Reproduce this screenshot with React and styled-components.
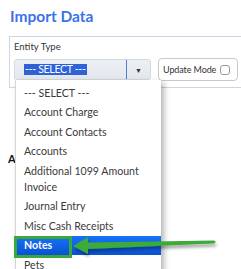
import { createGlobalStyle, styled } from "styled-components";

const GlobalStyle = createGlobalStyle`
  html, body {
    height: 100%;
  }
  body {
    margin: 0;
    background: #fff;
    font-family: Lato, "Open Sans", sans-serif;
    overflow: hidden;
  }
  #root {
    min-height: 100vh;
  }
`;

const options = [
  "--- SELECT ---",
  "Account Charge",
  "Account Contacts",
  "Accounts",
  "Additional 1099 Amount Invoice",
  "Journal Entry",
  "Misc Cash Receipts",
  "Notes",
  "Pets",
];

const App = () => {
  return (
    <Page>
      <GlobalStyle />
      <Title>Import Data</Title>
      <Panel>
        <Label>Entity Type</Label>
        <Row>
          <SelectWrap>
            <Select>
              <Value>
                <Selected>--- SELECT ---</Selected>
              </Value>
              <Caret>▼</Caret>
            </Select>
            <Dropdown>
              {options.map((o) => (
                <Item key={o} $active={o === "Notes"}>
                  {o}
                  {o === "Notes" && (
                    <>
                      <Callout />
                      <Arrow width="150" height="30" viewBox="0 0 150 30">
                        <defs>
                          <filter id="sh" x="-10%" y="-50%" width="120%" height="200%">
                            <feDropShadow dx="1" dy="3" stdDeviation="1.5" floodColor="#000" floodOpacity="0.35" />
                          </filter>
                        </defs>
                        <g filter="url(#sh)">
                          <polygon points="0,16 15,7 15,12.5 141,10.5 143,12 141,13.5 15,19 15,24" fill="#3cab3a" />
                        </g>
                      </Arrow>
                    </>
                  )}
                </Item>
              ))}
            </Dropdown>
          </SelectWrap>
          <Toggle>
            Update Mode
            <Check />
          </Toggle>
        </Row>
      </Panel>
      <Section>Attachments</Section>
    </Page>
  );
};

const Page = styled.div`
  padding: 7px 0 0 9px;
`;

const Title = styled.h1`
  margin: 0 0 11px 1px;
  font-size: 15.5px;
  line-height: 18px;
  font-weight: 700;
  color: #3a72ea;
`;

const Panel = styled.div`
  border: 1px solid #c9d7e6;
  border-right: none;
  padding: 4px 0 6px 4px;
`;

const Label = styled.div`
  font-size: 9.5px;
  line-height: 12px;
  color: #333;
  margin-bottom: 5px;
`;

const Row = styled.div`
  display: flex;
  align-items: center;
  gap: 7px;
`;

const SelectWrap = styled.div`
  position: relative;
`;

const Select = styled.div`
  width: 137px;
  height: 21px;
  box-sizing: border-box;
  display: flex;
  border: 1px solid #d3d9e0;
  border-radius: 3px;
  background: linear-gradient(#eceff3, #e4e8ed);
`;

const Value = styled.div`
  flex: 1;
  display: flex;
  align-items: center;
  padding-left: 9px;
  border-right: 1px solid #4f7fd0;
`;

const Selected = styled.span`
  background: #2f62d6;
  color: #fff;
  font-size: 10.5px;
  line-height: 11px;
  letter-spacing: -0.3px;
  padding: 0 1px;
`;

const Caret = styled.div`
  width: 23px;
  display: flex;
  align-items: center;
  justify-content: center;
  font-size: 7px;
  color: #333;
`;

const Dropdown = styled.div`
  position: absolute;
  top: 21px;
  left: 1px;
  width: 146px;
  box-sizing: border-box;
  padding-top: 3px;
  background: #fff;
  border-left: 1px solid #d6d6d6;
  box-shadow: 3px 3px 6px rgba(0, 0, 0, 0.3);
  z-index: 2;
`;

const Item = styled.div`
  position: relative;
  padding: 1.75px 9px 1.75px 8px;
  font-size: 10.6px;
  line-height: 16px;
  color: ${(p) => (p.$active ? "#fff" : "#3a3a3a")};
  font-weight: ${(p) => (p.$active ? 700 : 400)};
  background: ${(p) => (p.$active ? "linear-gradient(#1672f7, #0b52d2)" : "transparent")};
`;

const Callout = styled.div`
  position: absolute;
  left: -2px;
  top: 0;
  width: 58px;
  height: 22px;
  box-sizing: border-box;
  border: 3px solid #3aa83a;
`;

const Arrow = styled.svg`
  position: absolute;
  left: 57px;
  top: -6px;
  overflow: visible;
`;

const Toggle = styled.div`
  width: 80px;
  height: 23px;
  box-sizing: border-box;
  display: flex;
  align-items: center;
  justify-content: space-between;
  padding: 0 7px 0 4px;
  border: 1px solid #c9c9c9;
  border-radius: 4px;
  font-size: 9px;
  white-space: nowrap;
  letter-spacing: -0.1px;
  color: #333;
`;

const Check = styled.span`
  flex: none;
  width: 8px;
  height: 8px;
  border: 1px solid #9a9a9a;
  border-radius: 3px;
`;

const Section = styled.div`
  margin: 64px 0 0 -1px;
  font-size: 11px;
  font-weight: 700;
  color: #111;
`;

export default App;
